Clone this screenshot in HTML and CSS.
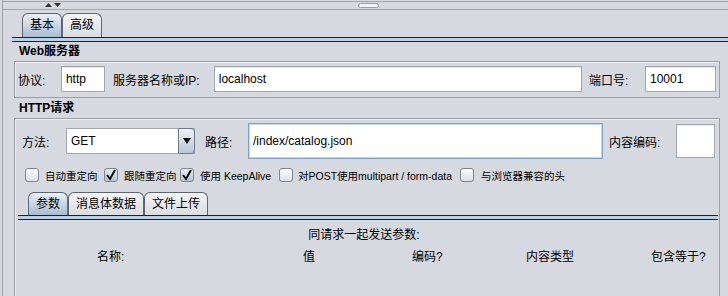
FILE: index.html
```html
<!DOCTYPE html>
<html lang="zh">
<head>
  <meta charset="UTF-8">
  <title>HTTP请求</title>
  <link rel="stylesheet" href="styles.css">
</head>
<body>
<div class="frame">

  <!-- splitter bar -->
  <div class="splitter">
    <svg class="arrows" width="16" height="5" viewBox="0 0 16 5">
      <polygon points="0,4 3.5,0 7,4" fill="#333"/>
      <polygon points="9,0 16,0 12.5,4" fill="#333"/>
    </svg>
    <div class="grip"></div>
  </div>

  <!-- top tabs -->
  <div class="tabs-area">
    <div class="tabrow">
      <div class="tab active">基本</div>
      <div class="tab">高级</div>
    </div>
    <div class="band"></div>
  </div>

  <!-- Web server -->
  <div class="title">Web服务器</div>
  <div class="box box-server">
    <div class="row">
      <span class="lbl w-proto">协议:</span>
      <input class="field w-http" type="text" value="http">
      <span class="lbl w-host">服务器名称或IP:</span>
      <input class="field w-localhost" type="text" value="localhost">
      <span class="lbl w-port">端口号:</span>
      <input class="field w-portval" type="text" value="10001">
    </div>
  </div>

  <!-- HTTP request -->
  <div class="title title2">HTTP请求</div>
  <div class="box box-http">
    <div class="row method-row">
      <span class="lbl w-method">方法:</span>
      <div class="combo">
        <span class="combo-text">GET</span>
        <span class="combo-btn">
          <svg width="8" height="6" viewBox="0 0 8 6"><polygon points="0,0 8,0 4,6" fill="#111"/></svg>
        </span>
      </div>
      <span class="lbl w-path">路径:</span>
      <input class="field focused w-pathval" type="text" value="/index/catalog.json">
      <span class="lbl w-enc">内容编码:</span>
      <input class="field w-encval" type="text" value="">
    </div>

    <div class="checks">
      <label class="check c1"><span class="cb"></span>自动重定向</label>
      <label class="check c2"><span class="cb on"><svg width="12" height="12" viewBox="0 0 12 12"><path d="M2 6 L5 10 L10 1" fill="none" stroke="#111" stroke-width="2"/></svg></span>跟随重定向</label>
      <label class="check c3"><span class="cb on"><svg width="12" height="12" viewBox="0 0 12 12"><path d="M2 6 L5 10 L10 1" fill="none" stroke="#111" stroke-width="2"/></svg></span>使用 KeepAlive</label>
      <label class="check c4"><span class="cb"></span>对POST使用multipart / form-data</label>
      <label class="check c5"><span class="cb"></span>与浏览器兼容的头</label>
    </div>

    <div class="inner-tabs">
      <div class="tabrow small">
        <div class="tab active">参数</div>
        <div class="tab">消息体数据</div>
        <div class="tab">文件上传</div>
      </div>
      <div class="band"></div>
      <div class="params-title">同请求一起发送参数:</div>
      <div class="params-head">
        <span>名称:</span>
        <span>值</span>
        <span>编码?</span>
        <span>内容类型</span>
        <span>包含等于?</span>
      </div>
    </div>
  </div>

</div>
</body>
</html>
```

FILE: styles.css
```css
body {
  margin: 0;
  height: 296px;
  overflow: hidden;
  background: #d6d9df;
  font-family: "Liberation Sans", "Noto Sans CJK SC", sans-serif;
  font-size: 12px;
  color: #000;
}
.frame {
  margin-left: 2px;
  border-left: 1px solid #9fa3a9;
  height: 296px;
  overflow: hidden;
}
.splitter {
  margin-top: 1px;
  height: 7px;
  border-top: 1px solid #a2a5ab;
  border-bottom: 1px solid #a2a5ab;
  display: flex;
  align-items: center;
}
.arrows {
  margin-left: 42px;
}
.grip {
  margin-left: 297px;
  width: 19px;
  height: 3px;
  border: 1px solid #9a9ea5;
  border-radius: 3px;
  background: #f3f4f6;
}
.tabs-area {
  margin: 3px 0 0 9px;
}
.tabrow {
  display: flex;
  padding-left: 10px;
  height: 24px;
}
.tab {
  box-sizing: border-box;
  height: 24px;
  padding: 0 7px;
  line-height: 23px;
  border: 1px solid #5e6673;
  border-bottom: none;
  border-radius: 6px 6px 0 0;
  background: linear-gradient(#f4f5f7, #d9dce1);
}
.tab.active {
  background: linear-gradient(#e9eff6, #a9bdd3);
}
.band {
  height: 3px;
  border-top: 1px solid #14233a;
  border-bottom: 1px solid #14233a;
  background: #bcd0e6;
}
.title {
  margin-left: 16px;
  height: 19px;
  line-height: 18px;
  font-weight: bold;
}
.title2 {
  height: 20px;
  line-height: 20px;
}
.box {
  margin-left: 11px;
  width: 706px;
  box-sizing: border-box;
  border: 1px solid #9c9fa5;
  box-shadow: inset 1px 1px 0 #eceef1;
}
.box-server {
  height: 37px;
  padding: 4px 3px;
}
.box-http {
  height: 179px;
  padding: 4px 0 0 7px;
}
.row {
  display: flex;
  align-items: center;
  height: 26px;
}
.method-row {
  height: 36px;
}
.lbl {
  white-space: nowrap;
}
.field {
  box-sizing: border-box;
  height: 26px;
  margin: 0;
  padding: 0 4px;
  border: 1px solid #a3a6ab;
  box-shadow: inset 0 1px 0 #e4e6e9;
  background: #fff;
  font: inherit;
  color: #000;
  outline: none;
}
.w-proto { width: 43px; }
.w-http { width: 44px; }
.w-host { width: 101px; margin-left: 8px; }
.w-localhost { width: 369px; }
.w-port { width: 56px; margin-left: 7px; }
.w-portval { width: 71px; }

.w-method { width: 44px; }
.combo {
  box-sizing: border-box;
  display: flex;
  width: 129px;
  height: 26px;
  border: 1px solid #a3a6ab;
  background: #fff;
}
.combo-text {
  flex: 1;
  padding-left: 4px;
  line-height: 24px;
}
.combo-btn {
  box-sizing: border-box;
  width: 17px;
  height: 26px;
  margin: -1px -1px 0 0;
  border: 1px solid #6f7b89;
  border-radius: 0 4px 4px 0;
  background: linear-gradient(#eef2f6, #b9c7d7);
  display: flex;
  align-items: center;
  justify-content: center;
}
.w-path { width: 43px; margin-left: 10px; }
.w-pathval { width: 355px; height: 36px; }
.focused {
  border-color: #7fa2c9;
  box-shadow: inset 0 0 0 1px #c4d6ea;
}
.w-enc { width: 67px; margin-left: 6px; }
.w-encval { width: 39px; height: 34px; }

.checks {
  display: flex;
  align-items: center;
  height: 14px;
  margin: 9px 0 0 3px;
  font-size: 10.5px;
}
.check {
  display: flex;
  align-items: center;
  white-space: nowrap;
}
.c1 { width: 79px; }
.c2 { width: 76px; }
.c3 { width: 99px; }
.c4 { width: 181px; }
.cb {
  box-sizing: border-box;
  width: 14px;
  height: 14px;
  margin-right: 6px;
  border: 1px solid #7d8590;
  border-radius: 3px;
  background: linear-gradient(#fcfcfd, #dde1e6);
  display: flex;
  align-items: center;
  justify-content: center;
}
.cb.on {
  background: linear-gradient(#e9eef5, #b5c5d7);
}
.c4 .cb { margin-right: 5px; }
.c5 .cb { margin-right: 7px; }

.inner-tabs {
  margin: 10px 0 0 -4px;
  width: 700px;
}
.inner-tabs .tabrow {
  height: 23px;
}
.inner-tabs .tab {
  height: 23px;
  line-height: 22px;
}
.params-title {
  margin-top: 8px;
  line-height: 15px;
  text-align: center;
  padding-right: 8px;
}
.params-head {
  display: grid;
  grid-template-columns: 206px 109px 114px 125px auto;
  margin-top: 7px;
  padding-left: 79px;
  line-height: 15px;
}
```
